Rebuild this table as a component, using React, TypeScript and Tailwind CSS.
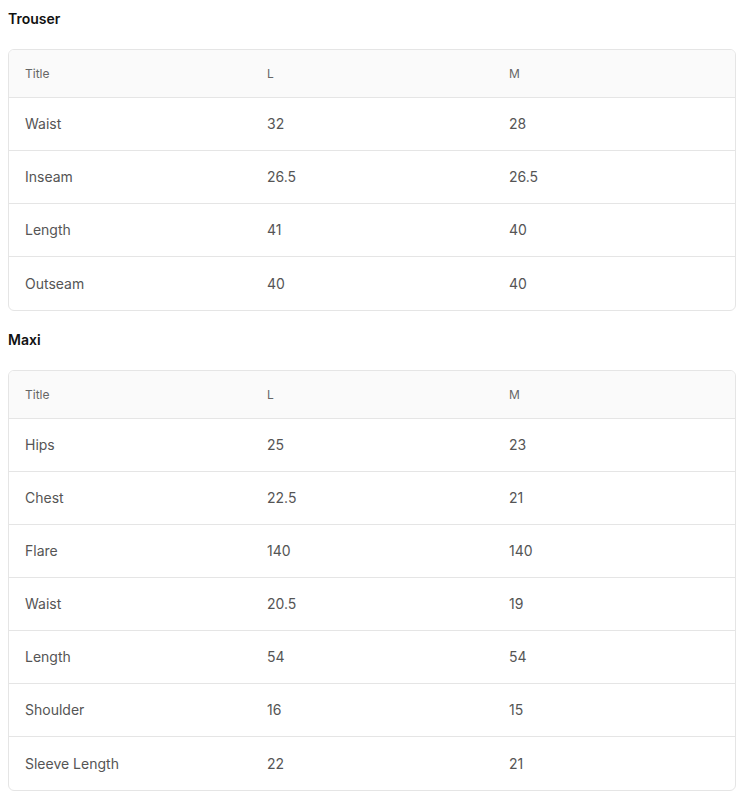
const trouser = [
  ["Waist", "32", "28"],
  ["Inseam", "26.5", "26.5"],
  ["Length", "41", "40"],
  ["Outseam", "40", "40"],
];

const maxi = [
  ["Hips", "25", "23"],
  ["Chest", "22.5", "21"],
  ["Flare", "140", "140"],
  ["Waist", "20.5", "19"],
  ["Length", "54", "54"],
  ["Shoulder", "16", "15"],
  ["Sleeve Length", "22", "21"],
];

function SizeTable({ title, rows }: { title: string; rows: string[][] }) {
  return (
    <section className="mb-[19px]">
      <h3 className="text-sm font-semibold leading-5 text-[#111] mb-5">{title}</h3>
      <div className="border border-[#e5e5e5] rounded-md overflow-hidden">
        <div className="grid grid-cols-3 h-12 items-center bg-[#fafafa] border-b border-[#e5e5e5] text-xs text-[#666]">
          <div className="px-4">Title</div>
          <div className="px-4">L</div>
          <div className="px-4">M</div>
        </div>
        {rows.map((r, i) => (
          <div
            key={i}
            className={`grid grid-cols-3 h-[53px] items-center text-sm text-[#555] ${
              i < rows.length - 1 ? "border-b border-[#e5e5e5]" : ""
            }`}
          >
            {r.map((c, j) => (
              <div key={j} className="px-4">
                {c}
              </div>
            ))}
          </div>
        ))}
      </div>
    </section>
  );
}

export default function App() {
  return (
    <div className="px-2 pt-[9px] pr-3 bg-white min-h-screen" style={{ fontFamily: "Inter, sans-serif" }}>
      <SizeTable title="Trouser" rows={trouser} />
      <SizeTable title="Maxi" rows={maxi} />
    </div>
  );
}
